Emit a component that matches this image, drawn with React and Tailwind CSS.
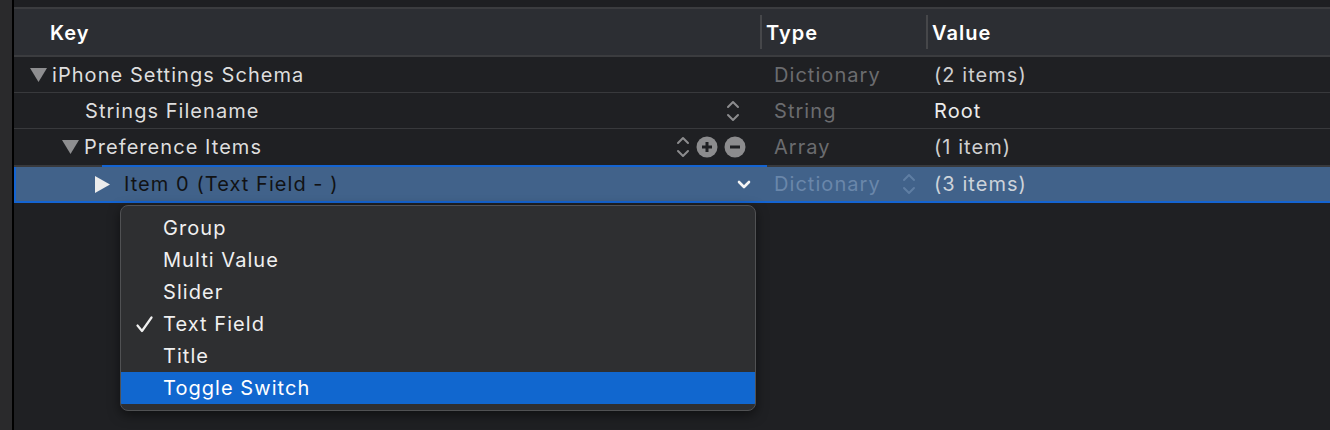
import React from 'react';

const font = { fontFamily: 'Inter, "Noto Sans", sans-serif' };

const UpDown = ({ className = 'stroke-[#8c8c8e]' }) => (
  <svg width="14" height="24" viewBox="0 0 14 24" fill="none" className={className} strokeWidth="2" strokeLinecap="round" strokeLinejoin="round">
    <path d="M2 8 L7 3 L12 8" />
    <path d="M2 16 L7 21 L12 16" />
  </svg>
);

const PlusCircle = () => (
  <svg width="22" height="22" viewBox="0 0 22 22">
    <circle cx="11" cy="11" r="10.5" fill="#8c8c8e" />
    <path d="M11 6 V16 M6 11 H16" stroke="#1f2023" strokeWidth="3" />
  </svg>
);

const MinusCircle = () => (
  <svg width="22" height="22" viewBox="0 0 22 22">
    <circle cx="11" cy="11" r="10.5" fill="#8c8c8e" />
    <path d="M6 11 H16" stroke="#1f2023" strokeWidth="3" />
  </svg>
);

const TriDown = () => (
  <svg width="17" height="14" viewBox="0 0 17 14">
    <polygon points="0,0 17,0 8.5,14" fill="#8e8e90" />
  </svg>
);

const TriRight = () => (
  <svg width="15" height="17" viewBox="0 0 15 17">
    <polygon points="0,0 15,8.5 0,17" fill="#ececec" />
  </svg>
);

const Row = ({ indent, tri, label, icons, type, value, valueClass = 'text-[#cfcfd0]', last }) => (
  <div className={`grid grid-cols-[746px_166px_1fr] h-[36px] ${last ? 'h-[35px]' : 'border-b border-[#38393c]'}`}>
    <div className="flex items-center relative">
      <div className={`flex items-center ${indent}`}>
        {tri && <span className="mr-[5px] flex">{tri}</span>}
        <span className="text-[20px] text-[#dedede]">{label}</span>
      </div>
      <div className="ml-auto flex items-center gap-[7px]">{icons}</div>
    </div>
    <div className="flex items-center pl-[14px] text-[20px] text-[#6b6c6f]">{type}</div>
    <div className={`flex items-center pl-[8px] text-[20px] ${valueClass}`}>{value}</div>
  </div>
);

const MenuItem = ({ label, checked, active }) => (
  <div className={`h-[32px] flex items-center text-[20px] ${active ? 'bg-[#1167cf] text-white' : 'text-[#f0f0f0]'}`}>
    <span className="w-[42px] flex justify-center pl-[4px]">
      {checked && (
        <svg width="17" height="17" viewBox="0 0 17 17" fill="none" stroke="#f0f0f0" strokeWidth="2.2" strokeLinecap="round" strokeLinejoin="round">
          <path d="M1.5 9.5 L6 15 L15.5 1.5" />
        </svg>
      )}
    </span>
    <span>{label}</span>
  </div>
);

export default function App() {
  return (
    <div className="w-[1330px] h-[430px] flex bg-[#1f2023] overflow-hidden tracking-[1.05px]" style={font}>
      <div className="w-[12px] bg-[#2a2a2c]" />
      <div className="w-[2px] bg-black" />
      <div className="flex-1 flex flex-col relative">
        <div className="h-[7px] bg-[#1e1f22]" />
        <div className="h-[2px] bg-[#3b3c3f]" />
        {/* Header */}
        <div className="grid grid-cols-[746px_166px_1fr] h-[48px] bg-[#2c2e33] border-b-2 border-[#3b3c3f]">
          <div className="flex items-center pl-[36px] pt-[1px] text-[20px] font-semibold text-white">Key</div>
          <div className="flex items-center">
            <div className="w-[2px] h-[34px] bg-[#46474a]" />
            <span className="pl-[4px] pt-[1px] text-[20px] font-semibold text-white">Type</span>
          </div>
          <div className="flex items-center">
            <div className="w-[2px] h-[34px] bg-[#46474a]" />
            <span className="pl-[4px] pt-[1px] text-[20px] font-semibold text-white">Value</span>
          </div>
        </div>

        <Row indent="pl-[16px]" tri={<TriDown />} label="iPhone Settings Schema" type="Dictionary" value="(2 items)" />
        <Row
          indent="pl-[71px]"
          label="Strings Filename"
          icons={<span className="mr-[20px] flex"><UpDown /></span>}
          type="String"
          value="Root"
          valueClass="text-[#ececec]"
        />
        <Row
          indent="pl-[48px]"
          tri={<TriDown />}
          label="Preference Items"
          icons={
            <span className="mr-[14px] flex items-center gap-[6px]">
              <UpDown />
              <PlusCircle />
              <MinusCircle />
            </span>
          }
          type="Array"
          value="(1 item)"
          last
        />

        {/* Selected row */}
        <div className="flex h-[2px]">
          <div className="w-[88px] bg-[#38393c]" />
          <div className="w-[665px] bg-[#1464d2]" />
          <div className="flex-1 bg-[#38393c]" />
        </div>
        <div className="grid grid-cols-[744px_166px_1fr] h-[34px] bg-[#41628a] border-l-2 border-[#1464d2]">
          <div className="flex items-center">
            <span className="pl-[79px] mr-[14px] flex"><TriRight /></span>
            <span className="text-[20px] text-[#111214]">Item 0 (Text Field - )</span>
            <svg className="ml-auto mr-[9px]" width="14" height="9" viewBox="0 0 14 9" fill="none" stroke="#f4f4f4" strokeWidth="2.6" strokeLinecap="round" strokeLinejoin="round">
              <path d="M2 2 L7 7 L12 2" />
            </svg>
          </div>
          <div className="flex items-center pl-[14px] text-[20px] text-[#6a87aa]">
            <span>Dictionary</span>
            <span className="ml-auto mr-[10px] flex"><UpDown className="stroke-[#5f7ea3]" /></span>
          </div>
          <div className="flex items-center pl-[8px] text-[20px] text-[#cdd3da]">(3 items)</div>
        </div>
        <div className="h-[2px] bg-[#1464d2]" />

        {/* Popup menu */}
        <div className="absolute left-[106px] top-[205px] w-[636px] rounded-[8px] bg-[#2e2f31] border border-[#505153] shadow-[0_4px_12px_rgba(0,0,0,0.5)] py-[6px] overflow-hidden">
          <MenuItem label="Group" />
          <MenuItem label="Multi Value" />
          <MenuItem label="Slider" />
          <MenuItem label="Text Field" checked />
          <MenuItem label="Title" />
          <MenuItem label="Toggle Switch" active />
        </div>
      </div>
    </div>
  );
}
